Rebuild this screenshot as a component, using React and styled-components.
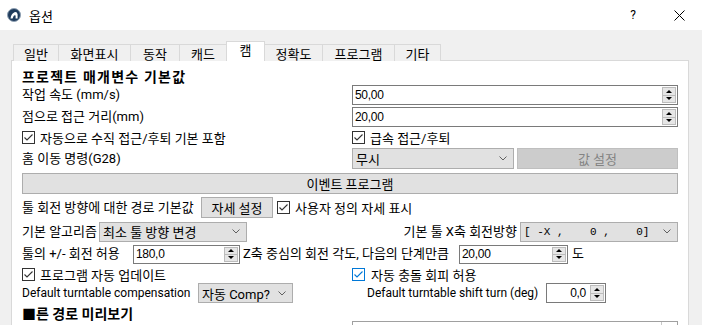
import React from 'react';
import styled, { createGlobalStyle } from 'styled-components';

const GlobalStyle = createGlobalStyle`
  html, body { margin: 0; padding: 0; background: #f0f0f0; }
  body {
    font-family: Roboto, "Noto Sans CJK KR", sans-serif;
    font-size: 13px;
    color: #000;
    overflow: hidden;
  }
  * { box-sizing: border-box; }
`;

const Window = styled.div`
  width: 702px;
  height: 325px;
  overflow: hidden;
  background: #f0f0f0;
  display: flex;
  flex-direction: column;
`;

const TitleBar = styled.div`
  flex: 0 0 30px;
  height: 30px;
  background: #fff;
  display: flex;
  align-items: center;
  padding-left: 7px;
`;

const TitleText = styled.span`
  margin-left: 8px;
  font-size: 13px;
`;

const Spacer = styled.div`
  flex: 1;
`;

const CaptionButton = styled.div`
  width: 46px;
  height: 30px;
  display: flex;
  align-items: center;
  justify-content: center;
  font-size: 12px;
`;

const TabBar = styled.div`
  display: flex;
  align-items: flex-end;
  height: 20px;
  margin: 11px 0 0 13px;
  position: relative;
  z-index: 1;
`;

const Tab = styled.div`
  flex: 0 0 auto;
  width: ${(p) => p.$w}px;
  height: ${(p) => (p.$active ? 20 : 17)}px;
  margin-right: -1px;
  border: 1px solid #d9d9d9;
  border-bottom: none;
  background: ${(p) => (p.$active ? '#fff' : '#f0f0f0')};
  display: flex;
  align-items: center;
  justify-content: center;
  padding-bottom: ${(p) => (p.$active ? 4 : 0)}px;
  white-space: nowrap;
`;

const Panel = styled.div`
  margin: -1px 0 0 11px;
  width: 678px;
  flex: 1;
  border: 1px solid #d9d9d9;
  border-bottom: none;
  background: #fff;
  padding: 5px 10px 0 10px;
  display: flex;
  flex-direction: column;
`;

const Row = styled.div`
  flex: 0 0 auto;
  height: ${(p) => p.$h}px;
  display: flex;
  align-items: center;
  gap: ${(p) => p.$gap ?? 0}px;
`;

const Split = styled.div`
  flex: 0 0 auto;
  height: ${(p) => p.$h}px;
  display: grid;
  grid-template-columns: 330px 326px;
  align-items: ${(p) => (p.$top ? 'start' : 'center')};
`;

const Cell = styled.div`
  display: flex;
  align-items: center;
  gap: ${(p) => p.$gap ?? 0}px;
  padding-left: ${(p) => p.$pl ?? 0}px;
  min-width: 0;
`;

const Heading = styled.div`
  font-weight: 700;
  font-size: 14px;
  letter-spacing: ${(p) => p.$ls ?? 0.4}px;
  white-space: nowrap;
  padding-top: 2px;
`;

const Label = styled.span`
  flex: 0 0 ${(p) => (p.$w ? `${p.$w}px` : 'auto')};
  margin-left: ${(p) => p.$ml ?? 0}px;
  font-size: ${(p) => (p.$latin ? 12 : 13)}px;
  white-space: nowrap;
  line-height: 16px;
`;

const SpinFrame = styled.div`
  flex: 0 0 auto;
  width: ${(p) => (p.$w ? `${p.$w}px` : '100%')};
  height: ${(p) => p.$h ?? 20}px;
  border: 1px solid #7a7a7a;
  background: #fff;
  display: flex;
  align-items: stretch;
  padding: 1px;
`;

const SpinValue = styled.span`
  flex: 1;
  display: flex;
  align-items: center;
  justify-content: ${(p) => (p.$right ? 'flex-end' : 'flex-start')};
  padding: 0 ${(p) => (p.$right ? 4 : 1)}px 0 1px;
  font-family: "Liberation Sans", Arial, sans-serif;
  font-size: 12px;
  letter-spacing: -0.3px;
`;

const SpinButtons = styled.div`
  flex: 0 0 14px;
  display: flex;
  flex-direction: column;
`;

const SpinBtn = styled.div`
  flex: 1;
  background: #e6e6e6;
  border: 1px solid #bcbcbc;
  display: flex;
  align-items: center;
  justify-content: center;
  & + & {
    border-top: none;
  }
`;

const Arrow = styled.span`
  width: 0;
  height: 0;
  border-left: 3px solid transparent;
  border-right: 3px solid transparent;
  ${(p) => (p.$down ? 'border-top: 3px solid #000;' : 'border-bottom: 3px solid #000;')}
`;

const SelectBox = styled.div`
  flex: ${(p) => (p.$w ? '0 0 auto' : '1')};
  width: ${(p) => (p.$w ? `${p.$w}px` : 'auto')};
  height: ${(p) => p.$h ?? 21}px;
  background: #e1e1e1;
  border: 1px solid #adadad;
  display: flex;
  align-items: center;
  padding: 0 6px 0 3px;
  font-family: ${(p) => (p.$mono ? '"Liberation Mono", monospace' : 'inherit')};
  font-size: ${(p) => (p.$mono ? 11 : 13)}px;
`;

const SelectText = styled.span`
  flex: 1;
  white-space: pre;
  overflow: hidden;
`;

const PushButton = styled.div`
  flex: ${(p) => (p.$w ? '0 0 auto' : '1')};
  width: ${(p) => (p.$w ? `${p.$w}px` : 'auto')};
  height: 21px;
  background: ${(p) => (p.$disabled ? '#cccccc' : '#e1e1e1')};
  border: 1px solid ${(p) => (p.$disabled ? '#bfbfbf' : '#adadad')};
  color: ${(p) => (p.$disabled ? '#838383' : '#000')};
  display: flex;
  align-items: center;
  justify-content: center;
  white-space: nowrap;
`;

const CheckRow = styled.label`
  display: flex;
  align-items: center;
  gap: ${(p) => p.$gap ?? 5}px;
  white-space: nowrap;
  margin-left: ${(p) => p.$ml ?? 0}px;
`;

const ListBox = styled.div`
  height: 30px;
  border: 1px solid #a0a0a0;
  border-bottom: none;
  display: flex;
  justify-content: flex-end;
  margin-top: 1px;
`;

const ListScroll = styled.div`
  width: 16px;
  border-left: 1px solid #c8c8c8;
`;

const AppIcon = () => (
  <svg width="14" height="14" viewBox="0 0 14 14">
    <circle cx="7" cy="7" r="6.5" fill="#1f3b5c" stroke="#8fa1b3" strokeWidth="1" />
    <path d="M3.5 10.5 Q4.2 5.5 7.5 4.2 Q10 3.6 10.6 6.2 L10.6 10.5 L8.6 10.5 L8.6 7.6 Q7.6 6.6 6.6 8 L5.6 10.5 Z" fill="#fff" />
  </svg>
);

const CloseGlyph = () => (
  <svg width="11" height="11" viewBox="0 0 11 11">
    <path d="M0.5 0.5 L10.5 10.5 M10.5 0.5 L0.5 10.5" stroke="#000" strokeWidth="1" />
  </svg>
);

const Chevron = () => (
  <svg width="8" height="5" viewBox="0 0 8 5">
    <polyline points="0.5,0.5 4,4 7.5,0.5" fill="none" stroke="#606060" strokeWidth="1" />
  </svg>
);

const CheckBox = ({ blue }) => {
  const c = blue ? '#0078d7' : '#333';
  return (
    <svg width="13" height="13" viewBox="0 0 13 13">
      <rect x="0.5" y="0.5" width="12" height="12" fill="#fff" stroke={c} strokeWidth="1" />
      <polyline points="2.5,6.5 5,9 10.5,3.5" fill="none" stroke={c} strokeWidth="1.1" />
    </svg>
  );
};

const Check = ({ children, blue, gap, ml }) => (
  <CheckRow $gap={gap} $ml={ml}>
    <CheckBox blue={blue} />
    <span>{children}</span>
  </CheckRow>
);

const Spin = ({ value, w, h, right }) => (
  <SpinFrame $w={w} $h={h}>
    <SpinValue $right={right}>{value}</SpinValue>
    <SpinButtons>
      <SpinBtn><Arrow /></SpinBtn>
      <SpinBtn><Arrow $down /></SpinBtn>
    </SpinButtons>
  </SpinFrame>
);

const Select = ({ children, w, h, mono }) => (
  <SelectBox $w={w} $h={h} $mono={mono}>
    <SelectText>{children}</SelectText>
    <Chevron />
  </SelectBox>
);

const tabs = [
  { label: '일반', w: 46 },
  { label: '화면표시', w: 73 },
  { label: '동작', w: 50 },
  { label: '캐드', w: 48 },
  { label: '캠', w: 39, active: true },
  { label: '정확도', w: 59 },
  { label: '프로그램', w: 73 },
  { label: '기타', w: 47 },
];

export default function App() {
  return (
    <>
      <GlobalStyle />
      <Window>
        <TitleBar>
          <AppIcon />
          <TitleText>옵션</TitleText>
          <Spacer />
          <CaptionButton>?</CaptionButton>
          <CaptionButton><CloseGlyph /></CaptionButton>
        </TitleBar>

        <TabBar>
          {tabs.map((t) => (
            <Tab key={t.label} $w={t.w} $active={t.active}>{t.label}</Tab>
          ))}
        </TabBar>

        <Panel>
          <Row $h={18}>
            <Heading $ls={1.2}>프로젝트 매개변수 기본값</Heading>
          </Row>
          <Split $h={22}>
            <Label>작업 속도 (mm/s)</Label>
            <Spin value="50,00" />
          </Split>
          <Split $h={22}>
            <Label>점으로 접근 거리(mm)</Label>
            <Spin value="20,00" />
          </Split>
          <Split $h={18}>
            <Check>자동으로 수직 접근/후퇴 기본 포함</Check>
            <Check>급속 접근/후퇴</Check>
          </Split>
          <Split $h={25}>
            <Label>홈 이동 명령(G28)</Label>
            <Cell $gap={3}>
              <Select w={162}>무시</Select>
              <PushButton $disabled>값 설정</PushButton>
            </Cell>
          </Split>
          <Row $h={24}>
            <PushButton>이벤트 프로그램</PushButton>
          </Row>
          <Row $h={25}>
            <Label $w={179}>툴 회전 방향에 대한 경로 기본값</Label>
            <PushButton $w={72}>자세 설정</PushButton>
            <Check ml={4}>사용자 정의 자세 표시</Check>
          </Row>
          <Row $h={23}>
            <Label $w={77}>기본 알고리즘</Label>
            <Select w={148} h={20}>최소 툴 방향 변경</Select>
            <Spacer />
            <Label>기본 툴 X축 회전방향</Label>
            <Label $w={3} />
            <Select w={158} h={20} mono>{'[ -X ,    0 ,    0]'}</Select>
          </Row>
          <Row $h={22}>
            <Label $w={111}>툴의 +/- 회전 허용</Label>
            <Spin value="180,0" w={107} h={19} />
            <Label $w={216} $ml={3}>Z축 중심의 회전 각도, 다음의 단계만큼</Label>
            <Spin value="20,00" w={109} h={19} />
            <Label $ml={4}>도</Label>
          </Row>
          <Split $h={18}>
            <Check>프로그램 자동 업데이트</Check>
            <Check blue gap={6}>자동 충돌 회피 허용</Check>
          </Split>
          <Split $h={20}>
            <Cell>
              <Label $w={176} $latin>Default turntable compensation</Label>
              <Select w={95} h={20}>자동 Comp?</Select>
            </Cell>
            <Cell $pl={15}>
              <Label $w={179} $latin>Default turntable shift turn (deg)</Label>
              <Spin value="0,0" w={60} h={20} right />
            </Cell>
          </Split>
          <Row $h={17}>
            <Heading $ls={0}>■른 경로 미리보기</Heading>
          </Row>
          <Split $h={30} $top>
            <div />
            <ListBox>
              <ListScroll />
            </ListBox>
          </Split>
        </Panel>
      </Window>
    </>
  );
}
